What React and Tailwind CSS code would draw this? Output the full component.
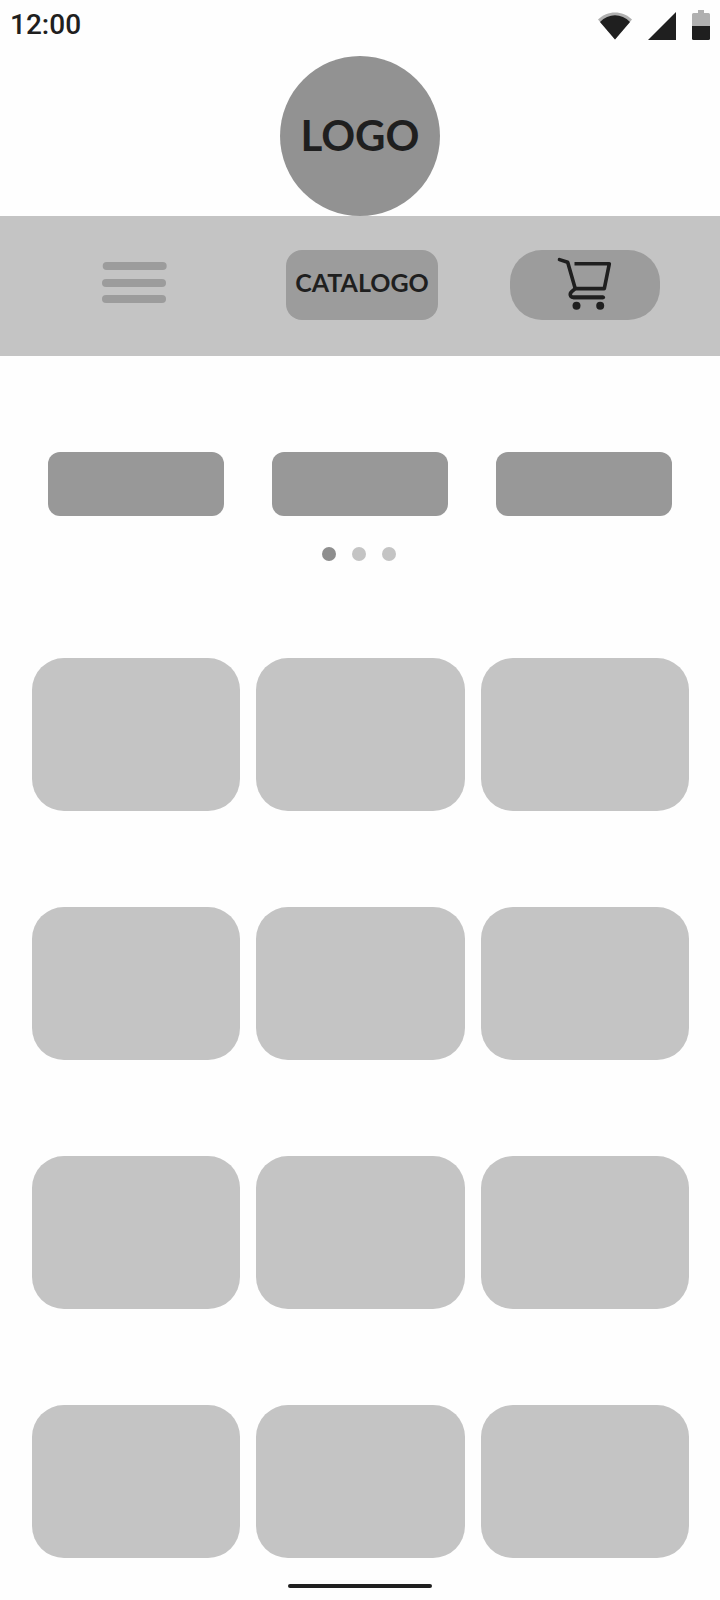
import React from "react";

const slides = ["Slide 1", "Slide 2", "Slide 3"];
const products = Array.from({ length: 12 }, (_, i) => `Product ${i + 1}`);

function StatusBar() {
  return (
    <div className="flex h-[50px] items-center justify-between px-[10px] font-[Roboto,sans-serif]">
      <time className="text-[28px] leading-8 font-medium">12:00</time>
      <div className="flex items-center gap-4">
        <svg width="34" height="30" viewBox="0 0 34 30" aria-hidden="true">
          <path d="M0 9.500C9.500 0 24.500 0 34 9.500L17 29.500Z" fill="#b0b0b0" />
          <path d="M2 12C10.500 3 23.500 3 32 12L17 29.500Z" fill="#1f1f1f" />
        </svg>
        <svg width="28" height="30" viewBox="0 0 28 30" aria-hidden="true">
          <path d="M0 30L28 2V30Z" fill="#1f1f1f" />
        </svg>
        <svg width="18" height="30" viewBox="0 0 18 30" aria-hidden="true">
          <path d="M6 0H12V3H16.500Q18 3 18 4.500V16H0V4.500Q0 3 1.500 3H6Z" fill="#b0b0b0" />
          <path d="M0 16H18V28.500Q18 30 16.500 30H1.500Q0 30 0 28.500Z" fill="#1f1f1f" />
        </svg>
      </div>
    </div>
  );
}

function CartIcon() {
  return (
    <svg
      width="56"
      height="56"
      viewBox="0 0 56 56"
      fill="none"
      stroke="#1f1f1f"
      strokeWidth="3.6"
      strokeLinejoin="round"
      aria-hidden="true"
    >
      <path d="M2.500 2.600L10.700 5.300L18.200 31.600" strokeLinecap="round" />
      <path d="M17.500 6.800H52.300L47.300 31.600H18.200L14.700 34.600C12.300 36.800 13 40.400 16.500 40.400H46.300" />
      <path d="M16.500 40.400H46.300" strokeLinecap="round" />
      <circle cx="19.500" cy="48.700" r="4" fill="#1f1f1f" stroke="none" />
      <circle cx="43.200" cy="48.700" r="4" fill="#1f1f1f" stroke="none" />
    </svg>
  );
}

export default function App() {
  return (
    <div className="flex min-h-screen flex-col bg-[#fefefe] font-[Lato,sans-serif] text-[#1f1f1f]">
      <StatusBar />
      <header className="pt-[6px]">
        <div className="mx-auto flex size-40 items-center justify-center rounded-full bg-[#929292]">
          <h1 className="pb-[2px] text-[42px] leading-10 font-bold">LOGO</h1>
        </div>
        <nav className="flex h-[140px] items-center justify-between bg-[#c4c4c4] pr-[60px] pb-[2px] pl-[54px]">
          <button type="button" aria-label="Menu" className="px-12 pt-3 pb-4">
            <svg width="66" height="42" viewBox="0 0 66 42" fill="#9c9c9c" className="-mr-[2px]" aria-hidden="true">
              <rect x="0.700" y="0" width="64" height="8" rx="4" />
              <rect x="0" y="17" width="64" height="8" rx="4" />
              <rect x="0" y="33" width="64" height="8" rx="4" />
            </svg>
          </button>
          <button
            type="button"
            className="flex h-[70px] w-[152px] items-center justify-center rounded-2xl bg-[#9c9c9c] pb-1 text-[25px] font-bold"
          >
            CATALOGO
          </button>
          <button
            type="button"
            aria-label="Cart"
            className="flex h-[70px] w-[150px] items-center justify-center rounded-[32px] bg-[#9c9c9c]"
          >
            <CartIcon />
          </button>
        </nav>
      </header>

      <main className="flex-1">
        <section aria-label="Featured" className="px-12 pt-24">
          <div className="grid grid-cols-3 gap-12">
            {slides.map((name) => (
              <a key={name} href="#featured" aria-label={name} className="h-16 rounded-xl bg-[#989898]" />
            ))}
          </div>
          <div className="mt-[31px] flex justify-center gap-4 pr-[2px]">
            {slides.map((name, i) => (
              <button
                key={name}
                type="button"
                aria-label={name}
                className={`size-[14px] rounded-full ${i === 0 ? "bg-[#8e8e8e]" : "bg-[#c4c4c4]"}`}
              />
            ))}
          </div>
        </section>

        <section
          aria-label="Products"
          className="mt-[97px] grid grid-cols-3 gap-x-4 gap-y-24 pr-[31px] pl-8"
        >
          {products.map((name) => (
            <a key={name} href="#product" aria-label={name} className="h-[153px] rounded-[32px] bg-[#c4c4c4]" />
          ))}
        </section>
      </main>

      <footer className="flex justify-center pt-[26px] pb-3">
        <div className="h-1 w-36 rounded-full bg-[#1f1f1f]" />
      </footer>
    </div>
  );
}
